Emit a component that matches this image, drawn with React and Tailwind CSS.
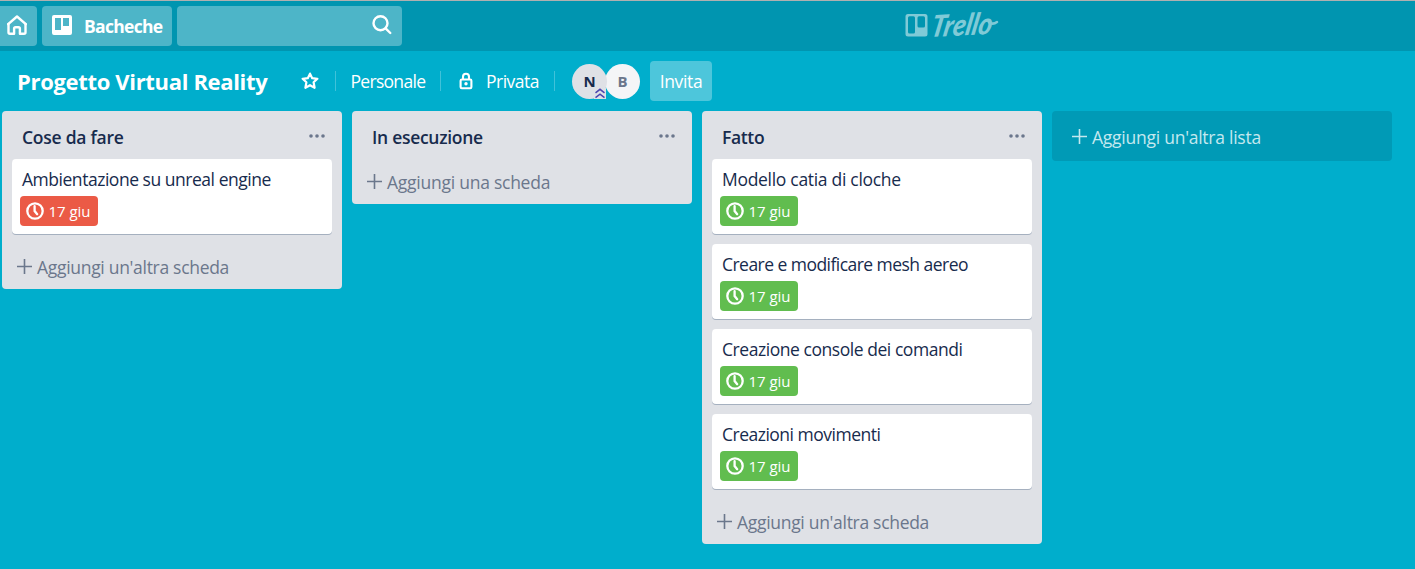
import React from 'react';

const LISTS = [
  {
    title: 'Cose da fare',
    titleClass: 'tracking-[-0.25px]',
    cards: [{ title: 'Ambientazione su unreal engine', tracking: 'tracking-[-0.47px]', done: false }],
    add: "Aggiungi un'altra scheda",
    addClass: 'tracking-[-0.3px]',
  },
  {
    title: 'In esecuzione',
    titleClass: 'tracking-[-0.29px]',
    cards: [],
    add: 'Aggiungi una scheda',
    addClass: 'tracking-[-0.25px]',
  },
  {
    title: 'Fatto',
    titleClass: 'tracking-[-0.35px]',
    cards: [
      { title: 'Modello catia di cloche', tracking: 'tracking-[-0.3px]', done: true },
      { title: 'Creare e modificare mesh aereo', tracking: 'tracking-[-0.54px]', done: true },
      { title: 'Creazione console dei comandi', tracking: 'tracking-[-0.45px]', done: true },
      { title: 'Creazioni movimenti', tracking: 'tracking-[-0.5px]', done: true },
    ],
    add: "Aggiungi un'altra scheda",
    addClass: 'tracking-[-0.3px]',
  },
];

function HomeIcon() {
  return (
    <svg width="20" height="20" viewBox="0 0 20 20" fill="none" stroke="white" strokeWidth="2.4" strokeLinejoin="round" strokeLinecap="round">
      <path d="M1.2 9.2 10 1.5l8.8 7.7" />
      <path d="M1.5 9v8.3q0 1.5 1.5 1.5h4.1v-5q0-1.5 1.5-1.5h2.8q1.5 0 1.5 1.5v5h4.1q1.5 0 1.5-1.5V9" />
    </svg>
  );
}

function BoardIcon() {
  return (
    <svg width="20" height="20" viewBox="0 0 20 20" fill="white" fillRule="evenodd">
      <path d="M2 0h16a2 2 0 0 1 2 2v16a2 2 0 0 1-2 2H2a2 2 0 0 1-2-2V2a2 2 0 0 1 2-2ZM3 3v12h6V3ZM11 3v8h6V3Z" />
    </svg>
  );
}

function SearchIcon() {
  return (
    <svg width="20" height="20" viewBox="0 0 20 20" fill="none" stroke="white" strokeWidth="2.4" strokeLinecap="round">
      <circle cx="8.5" cy="8.2" r="7" />
      <path d="m13.6 13.4 4.7 4.6" />
    </svg>
  );
}

function StarIcon() {
  return (
    <svg width="18" height="18" viewBox="0 0 18 18" fill="none" stroke="white" strokeWidth="2.2" strokeLinejoin="round">
      <path d="m9 1.6 2.2 4.6 5.2.6-3.8 3.5 1 5.5L9 13.2l-4.6 2.6 1-5.5-3.8-3.5 5.2-.6Z" />
    </svg>
  );
}

function LockIcon() {
  return (
    <svg width="14" height="18" viewBox="0 0 14 18" fill="none" stroke="white" strokeWidth="2.1">
      <rect x="1.6" y="7.5" width="10.8" height="8.8" rx="1.2" />
      <path d="M4 7V4.8a3 3 0 0 1 6 0V7" />
      <circle cx="7" cy="11.8" r="1.7" fill="white" stroke="none" />
    </svg>
  );
}

function ClockIcon() {
  return (
    <svg width="18" height="18" viewBox="0 0 18 18" fill="none" stroke="white" strokeWidth="2.3">
      <circle cx="9" cy="9" r="7.7" />
      <path d="M8.6 4.2V9l2.6 3.2" strokeLinecap="round" />
    </svg>
  );
}

function PlusIcon() {
  return (
    <svg width="15" height="15" viewBox="0 0 15 15" fill="none" stroke="currentColor" strokeWidth="1.6">
      <path d="M7.5 0v15M0 7.5h15" />
    </svg>
  );
}

function DotsIcon() {
  return (
    <svg width="16" height="4" viewBox="0 0 16 4" fill="#6b778c">
      <circle cx="2" cy="2" r="1.8" />
      <circle cx="8" cy="2" r="1.8" />
      <circle cx="14" cy="2" r="1.8" />
    </svg>
  );
}

function TrelloLogo() {
  return (
    <svg className="overflow-visible" width="110" height="43" viewBox="0 -5 110 43" fill="#80cad7">
      <path
        fillRule="evenodd"
        d="M3 6h17a2.5 2.5 0 0 1 2.5 2.5v17.5a2.5 2.5 0 0 1-2.5 2.5H3a2.5 2.5 0 0 1-2.5-2.5V8.5A2.5 2.5 0 0 1 3 6ZM4.500 8.300a1.500 1.500 0 0 0-1.500 1.500V24a1.500 1.500 0 0 0 1.500 1.500h4A1.500 1.500 0 0 0 10 24V9.800A1.500 1.500 0 0 0 8.500 8.300ZM14 8.300a1.500 1.500 0 0 0-1.500 1.500V18a1.500 1.500 0 0 0 1.500 1.500h4.500A1.500 1.500 0 0 0 20 18V9.800a1.500 1.500 0 0 0-1.500-1.500Z"
      />
      <text
        x="27"
        y="29"
        transform="rotate(-3 27 29) translate(5 0) skewX(-14)"
        fontFamily="Lato, sans-serif"
        fontStyle="italic"
        fontWeight="900"
        fontSize="30"
        textLength="61"
        lengthAdjust="spacingAndGlyphs"
      >
        Trello
      </text>
      <path d="M84 14.5q4 2.500 8-.5" fill="none" stroke="#80cad7" strokeWidth="2.5" strokeLinecap="round" />
    </svg>
  );
}

function Card({ card }) {
  return (
    <article className="h-[75px] rounded-[4px] bg-white px-2 pt-[7px] shadow-[0_1px_0_#a5b0bf]">
      <h3 className={`h-[26px] px-0.5 text-[17.5px] leading-[26px] whitespace-nowrap text-[#172b4d] ${card.tracking}`}>
        {card.title}
      </h3>
      <div
        className={`mt-1 flex h-[30px] w-[78px] items-center gap-[5px] rounded-[4px] pl-[5.5px] text-[15px] font-medium tracking-[-0.05px] whitespace-nowrap text-white ${
          card.done ? 'bg-[#61bd4f]' : 'bg-[#eb5a46]'
        }`}
      >
        <ClockIcon />
        <span>17 giu</span>
      </div>
    </article>
  );
}

function List({ list }) {
  return (
    <section className="w-[340px] shrink-0 rounded-[4px] bg-[#dfe1e6] px-2.5">
      <header className="flex h-12 items-center justify-between pt-[5px] pr-[7px] pl-2.5">
        <h2 className={`text-[17.5px] font-semibold whitespace-nowrap text-[#172b4d] ${list.titleClass}`}>{list.title}</h2>
        <span className="pb-1">
          <DotsIcon />
        </span>
      </header>
      <div className="flex flex-col gap-2.5">
        {list.cards.map((card) => (
          <Card key={card.title} card={card} />
        ))}
      </div>
      <button
        className={`flex h-[45px] items-center gap-[5px] pl-[5px] text-[17.5px] whitespace-nowrap text-[#6b778c] ${list.addClass} ${
          list.cards.length ? 'mt-2.5' : ''
        }`}
      >
        <PlusIcon />
        <span className="pt-0.5">{list.add}</span>
      </button>
    </section>
  );
}

export default function App() {
  return (
    <div className="h-[569px] w-[1415px] overflow-hidden bg-[#00aecc] font-['Open_Sans','Noto_Sans',sans-serif]">
      <nav className="flex h-[51px] items-start border-t border-[#b0b0b0] bg-[#0095b0] pt-[5px]">
        <button className="flex h-10 w-[37px] items-center rounded-r-[4px] bg-[#4db5c8] pb-0.5 pl-[7px]">
          <HomeIcon />
        </button>
        <button className="ml-[5px] flex h-10 w-[130px] items-center gap-3 rounded-[4px] bg-[#4db5c8] pl-2.5 text-white">
          <span className="pb-0.5">
            <BoardIcon />
          </span>
          <span className="pt-px text-[17.5px] font-bold tracking-[-0.7px]">Bacheche</span>
        </button>
        <div className="ml-[5px] flex h-10 w-[225px] items-center justify-end rounded-[4px] bg-[#4db5c8] pr-2.5 pb-0.5">
          <SearchIcon />
        </div>
        <div className="-mt-[3px] ml-[503px]">
          <TrelloLogo />
        </div>
      </nav>

      <header className="flex h-[60px] items-center pl-[17px] text-[17.5px] whitespace-nowrap text-white">
        <h1 className="w-[283.5px] text-[22px] font-bold tracking-[-0.33px]">Progetto Virtual Reality</h1>
        <StarIcon />
        <span className="ml-[16.5px] h-5 w-px bg-[#40c2d9]" />
        <span className="ml-[14.5px] w-[75px] tracking-[-0.7px]">Personale</span>
        <span className="ml-[14.5px] h-5 w-px bg-[#40c2d9]" />
        <span className="ml-[18px]">
          <LockIcon />
        </span>
        <span className="ml-[13px] w-[53px] tracking-[-0.5px]">Privata</span>
        <span className="ml-[15px] h-5 w-px bg-[#40c2d9]" />
        <div className="relative ml-[17px] flex h-[35px] w-[35px] items-center justify-center rounded-full bg-[#dfe1e6] text-[15px] font-bold text-[#172b4d]">
          N
          <svg className="absolute right-px bottom-0" width="12" height="11" viewBox="0 0 12 11">
            <rect width="12" height="11" fill="#dfe1e6" />
            <path d="m1.5 4.8 4.5-3.5 4.5 3.5M1.5 9.6 6 6.100l4.500 3.500" fill="none" stroke="#4c45b0" strokeWidth="1.5" />
          </svg>
        </div>
        <div className="-ml-[2px] flex h-[35px] w-[35px] items-center justify-center rounded-full bg-[#f4f5f7] text-[15px] font-bold text-[#6b778c]">
          B
        </div>
        <button className="ml-2.5 h-10 w-[62px] rounded-[4px] bg-[#4dc6db] tracking-[-0.35px]">Invita</button>
      </header>

      <main className="flex items-start gap-2.5 pl-0.5">
        {LISTS.map((list) => (
          <List key={list.title} list={list} />
        ))}
        <button className="flex h-[50px] w-[340px] items-center gap-[5px] rounded-[4px] bg-[#009ab6] pl-5 text-[17.5px] tracking-[-0.25px] whitespace-nowrap text-[#c4e8ef]">
          <PlusIcon />
          <span className="pt-[3px]">Aggiungi un'altra lista</span>
        </button>
      </main>
    </div>
  );
}
